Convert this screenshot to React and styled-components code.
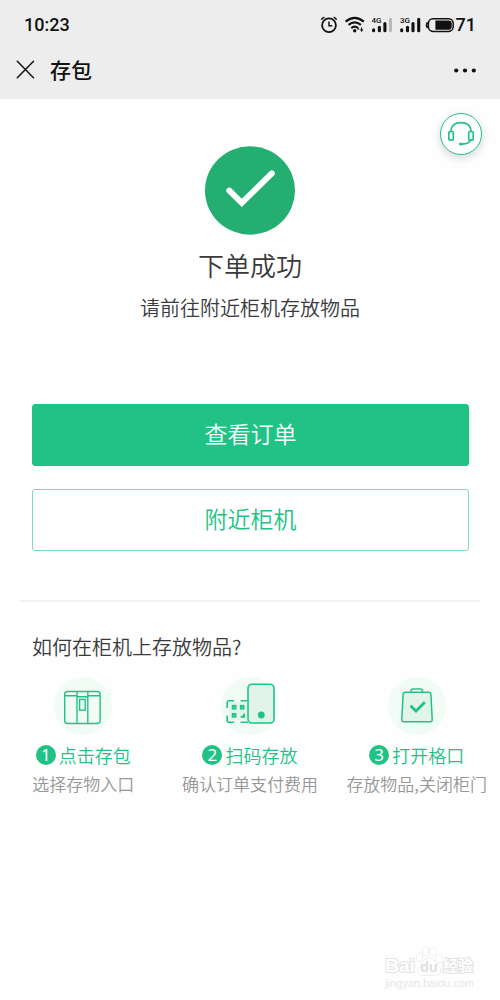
import React from "react";
import styled, { createGlobalStyle } from "styled-components";

const GREEN = "#20c385";

const GlobalStyle = createGlobalStyle`
  *, *::before, *::after { box-sizing: border-box; }
  body {
    margin: 0;
    background: #fefefe;
    color: #3a3a3a;
    font-family: "Noto Sans CJK SC", sans-serif;
    font-weight: 350;
  }
  h1, h2, h3, p, ol { margin: 0; padding: 0; font-weight: inherit; }
  button { font: inherit; cursor: pointer; }
  svg { display: block; }
`;

const Page = styled.div`
  position: relative;
  min-height: 100vh;
  display: flex;
  flex-direction: column;
`;

const TopArea = styled.header`
  background: #ededed;
  color: #111;
`;

const StatusBar = styled.div`
  display: flex;
  align-items: center;
  justify-content: space-between;
  height: 50px;
  padding: 0 24px;
  font-family: Roboto, sans-serif;
  font-size: 18px;
  font-weight: 500;
  line-height: 24px;
`;

const StatusIcons = styled.div`
  display: flex;
  align-items: center;
  gap: 2px;
  svg { flex: none; }
`;

const NavBar = styled.nav`
  display: flex;
  align-items: center;
  height: 49px;
  padding: 0 22px 10px 16px;
`;

const IconButton = styled.button`
  display: flex;
  padding: 0;
  border: 0;
  background: none;
  color: inherit;
`;

const NavTitle = styled.h1`
  flex: 1;
  margin-left: 15px;
  padding-bottom: 2px;
  font-size: 21px;
  line-height: 28px;
  && { font-weight: 500; }
`;

const Content = styled.main`
  position: relative;
  padding: 47px 0 24px;
`;

const ServiceButton = styled.button`
  position: absolute;
  top: 14px;
  right: 18px;
  display: flex;
  align-items: center;
  justify-content: center;
  width: 42px;
  height: 42px;
  padding: 0;
  border: 1px solid ${GREEN};
  border-radius: 50%;
  background: #fff;
  color: ${GREEN};
  box-shadow: 0 3px 8px rgba(0, 0, 0, 0.16);
`;

const Result = styled.section`
  display: flex;
  flex-direction: column;
  align-items: center;
  text-align: center;
`;

const ResultTitle = styled.h2`
  margin-top: 12px;
  font-size: 26px;
  line-height: 36px;
`;

const ResultText = styled.p`
  margin-top: 11px;
  font-size: 20px;
  line-height: 28px;
`;

const Actions = styled.div`
  display: flex;
  flex-direction: column;
  gap: 23px;
  padding: 0 31px 0 32px;
  margin-top: 82px;
`;

const ActionButton = styled.button`
  width: 100%;
  height: 62px;
  padding: 0 0 5px;
  border: 1px solid ${(p) => (p.$primary ? GREEN : "#7fdcb6")};
  border-radius: 3px;
  background: ${(p) => (p.$primary ? GREEN : "#fff")};
  color: ${(p) => (p.$primary ? "#fff" : GREEN)};
  font-size: 23px;
  line-height: 32px;
`;

const Divider = styled.hr`
  height: 2px;
  margin: 49px 20px 0;
  border: 0;
  background: #f1f1f1;
`;

const GuideTitle = styled.h2`
  margin: 31px 32px 0;
  font-size: 20px;
  line-height: 28px;
`;

const Steps = styled.ol`
  display: grid;
  grid-template-columns: repeat(3, minmax(0, 1fr));
  margin-top: 16px;
  list-style: none;
`;

const Step = styled.li`
  display: flex;
  flex-direction: column;
  align-items: center;
  white-space: nowrap;
`;

const StepTitle = styled.h3`
  display: flex;
  align-items: center;
  gap: 3px;
  margin-top: 7px;
  color: ${GREEN};
  font-size: 18px;
  line-height: 26px;
`;

const StepNumber = styled.span`
  width: 20px;
  height: 20px;
  border-radius: 50%;
  background: ${GREEN};
  color: #fff;
  font-family: "Noto Sans", sans-serif;
  font-size: 17px;
  font-weight: 400;
  line-height: 20px;
  text-align: center;
`;

const StepText = styled.p`
  margin-top: 4px;
  color: #979797;
  font-size: 17px;
  line-height: 24px;
`;

const Watermark = styled.div`
  position: absolute;
  right: 26px;
  bottom: 10px;
  color: #fff;
  font-family: "Liberation Sans", "Noto Sans CJK SC", sans-serif;
`;

const WatermarkBrand = styled.div`
  display: flex;
  align-items: flex-end;
  font-size: 19px;
  font-weight: 700;
  line-height: 20px;
  -webkit-text-stroke: 2px #e2e2e2;
  paint-order: stroke fill;
`;

const Paw = styled.span`
  position: relative;
  width: 28px;
  height: 30px;
  svg { position: absolute; inset: 0; }
`;

const PawText = styled.span`
  position: absolute;
  left: 0;
  right: 0;
  bottom: 0;
  color: #dedede;
  font-size: 14px;
  line-height: 18px;
  text-align: center;
  -webkit-text-stroke: 0;
`;

const WatermarkCn = styled.span`
  font-size: 15px;
`;

const WatermarkSite = styled.div`
  color: #e6e6e6;
  font-size: 11px;
  font-weight: 400;
  line-height: 14px;
`;

function StatusGlyphs() {
  return (
    <svg width="134" height="24" viewBox="320 13 134 24" fill="none" stroke="#111" aria-hidden="true">
      <circle cx="329" cy="25.2" r="6.9" strokeWidth="1.8" />
      <path d="M329 21.5v4.2h3.2" strokeWidth="1.5" />
      <path d="M321.4 19.8q.8-1.8 3-2.5M336.6 19.8q-.8-1.8-3-2.5" strokeWidth="1.6" />
      <g strokeWidth="2.1">
        <path d="M345.6 21.6q9-7.6 18.2 0" />
        <path d="M348.5 24.9q6.2-5 12.4 0" />
        <path d="M351.3 28.1q3.4-2.8 6.8 0" />
      </g>
      <circle cx="354.7" cy="30.8" r="1.7" fill="#111" stroke="none" />
      <path d="M361.6 27.6v3.4" strokeWidth="1.2" />
      <path d="M357 29.6l1.4-1.7 1.4 1.7zM359.9 29.6h3.4l-1.7 2.4z" fill="#111" stroke="none" />
      <g strokeWidth="3.1" strokeLinecap="round">
        <path d="M373.6 29.7v1" />
        <path d="M379.4 27.2v3.5" />
        <path d="M384.9 23.6v7.1" />
        <path d="M390.5 19.2v11.5" stroke="#b9b9b9" />
        <path d="M401.7 29.7v1" />
        <path d="M407.5 27.2v3.5" />
        <path d="M413 23.6v7.1" />
        <path d="M418.7 19.2v11.5" />
      </g>
      <g fill="#111" stroke="none" fontFamily="Roboto, sans-serif" fontSize="8" fontWeight="500">
        <text x="371.5" y="23">4G</text>
        <text x="400" y="23">3G</text>
      </g>
      <rect x="428.4" y="18.8" width="24.8" height="12.6" rx="4.6" strokeWidth="1.5" />
      <path d="M427.6 22.2q-2.2 2.900 0 5.800" strokeWidth="1.6" />
      <path d="M435.4 20.5h13.3a3 3 0 0 1 3 3v3.2a3 3 0 0 1-3 3h-13.3z" fill="#111" stroke="none" />
    </svg>
  );
}

function CloseIcon() {
  return (
    <svg width="19" height="19" viewBox="0 0 19 19" fill="none" stroke="#1a1a1a" strokeWidth="1.6" strokeLinecap="round">
      <path d="M1.3 1.3l16.2 16.4M17.5 1.3L1.3 17.7" />
    </svg>
  );
}

function MoreIcon() {
  return (
    <svg width="24" height="20" viewBox="0 0 24 20" fill="#111">
      <circle cx="2.2" cy="10.5" r="2.1" />
      <circle cx="11" cy="10.5" r="2.1" />
      <circle cx="19.8" cy="10.5" r="2.1" />
    </svg>
  );
}

function HeadsetIcon() {
  return (
    <svg width="28" height="28" viewBox="0 0 28 28" fill="none" stroke="currentColor" strokeWidth="1.7" strokeLinecap="round">
      <path d="M3.8 11.5C4.2 5.4 8.4 2.7 14 2.7S23.8 5.4 24.2 11.5" />
      <rect x="1.8" y="11.5" width="4.5" height="8.6" rx="1.2" />
      <rect x="21.7" y="11.5" width="4.5" height="8.6" rx="1.2" />
      <path d="M23.5 20.2q-1.4 3.6-8.5 4" />
      <path d="M13.2 24.1h1.3" strokeWidth="2.6" />
    </svg>
  );
}

function SuccessIcon() {
  return (
    <svg width="90" height="89" viewBox="0 0 90 89" role="img" aria-label="成功">
      <ellipse cx="45" cy="44.5" rx="45" ry="44.2" fill="#24ae72" />
      <path d="M24.3 44.7L36.8 56.8L66.8 27.4" fill="none" stroke="#fff" strokeWidth="6" strokeLinecap="round" />
    </svg>
  );
}

function LockerIcon() {
  return (
    <svg width="58" height="58" viewBox="0 0 58 58" fill="none" stroke={GREEN} strokeWidth="1.4">
      <circle cx="29" cy="29" r="29" fill="#f2fcf7" stroke="none" />
      <rect x="10.7" y="14.5" width="35.4" height="32" rx="3" />
      <path d="M11 18.8h12M33.8 18.8H46M23 14.5v32M33.8 14.5v32M23 19.8h10.8" />
      <rect x="25.6" y="22.4" width="5.6" height="10.8" />
    </svg>
  );
}

function ScanIcon() {
  return (
    <svg width="58" height="58" viewBox="0 0 58 58" fill="none" stroke={GREEN} strokeWidth="1.6">
      <circle cx="29" cy="29" r="29" fill="#f2fcf7" stroke="none" />
      <rect x="8" y="25" width="18" height="18" fill="#e5f5ed" stroke="none" />
      <path d="M6.2 31v-5.2q0-2 2-2h5M19.5 23.8h7M6.2 38.5v4.7q0 2 2 2h5M19.5 45.2h7.5" />
      <rect x="27" y="7.2" width="26" height="38.8" rx="4" fill="#e1f3ea" />
      <circle cx="40.3" cy="38" r="3.4" fill={GREEN} stroke="none" />
      <g strokeWidth="1.9">
        <rect x="11.7" y="28.8" width="2.8" height="2.8" />
        <rect x="19.8" y="28.8" width="2.8" height="2.8" />
        <rect x="11.7" y="36.9" width="2.8" height="2.8" />
        <path d="M23 36.5v3.2h-3.4" />
      </g>
    </svg>
  );
}

function BagIcon() {
  return (
    <svg width="58" height="58" viewBox="0 0 58 58" fill="none" stroke={GREEN} strokeWidth="1.5" strokeLinejoin="round">
      <circle cx="29" cy="29" r="29" fill="#f2fcf7" stroke="none" />
      <path d="M23 15v-1q0-2 2-2h7.5q2 0 2 2v1" />
      <path d="M17.2 15.3h23.6q2 0 2.1 2l1.3 25.2q.1 2.3-2.1 2.3H15.9q-2.2 0-2.1-2.3l1.3-25.2q.1-2 2.1-2z" fill="#e1f3ea" />
      <path d="M22.500 28.700l5.500 5.300 8.800-8.800" strokeWidth="2.800" strokeLinejoin="miter" />
    </svg>
  );
}

function PawIcon() {
  return (
    <svg width="28" height="30" viewBox="0 0 28 30" fill="#fff" stroke="#dedede">
      <ellipse cx="4.5" cy="11.5" rx="3" ry="4" />
      <ellipse cx="10.5" cy="5.3" rx="3" ry="4.2" />
      <ellipse cx="18" cy="5.5" rx="3" ry="4.2" />
      <ellipse cx="24" cy="12.3" rx="3" ry="4" />
      <path d="M14 12C9 12 8 17 4.500 20.500C1 24 3 29 8 29H20C26 29 27 24 23.500 20.500C20 17 19 12 14 12Z" />
    </svg>
  );
}

const steps = [
  { Icon: LockerIcon, title: "点击存包", text: "选择存物入口" },
  { Icon: ScanIcon, title: "扫码存放", text: "确认订单支付费用" },
  { Icon: BagIcon, title: "打开格口", text: "存放物品,关闭柜门" },
];

export default function App() {
  return (
    <Page>
      <GlobalStyle />
      <TopArea>
        <StatusBar>
          <span>10:23</span>
          <StatusIcons>
            <StatusGlyphs />
            <span>71</span>
          </StatusIcons>
        </StatusBar>
        <NavBar>
          <IconButton aria-label="关闭"><CloseIcon /></IconButton>
          <NavTitle>存包</NavTitle>
          <IconButton aria-label="更多"><MoreIcon /></IconButton>
        </NavBar>
      </TopArea>
      <Content>
        <ServiceButton aria-label="客服"><HeadsetIcon /></ServiceButton>
        <Result>
          <SuccessIcon />
          <ResultTitle>下单成功</ResultTitle>
          <ResultText>请前往附近柜机存放物品</ResultText>
        </Result>
        <Actions>
          <ActionButton $primary>查看订单</ActionButton>
          <ActionButton>附近柜机</ActionButton>
        </Actions>
        <Divider />
        <GuideTitle>如何在柜机上存放物品?</GuideTitle>
        <Steps>
          {steps.map(({ Icon, title, text }, i) => (
            <Step key={title}>
              <Icon />
              <StepTitle>
                <StepNumber>{i + 1}</StepNumber>
                {title}
              </StepTitle>
              <StepText>{text}</StepText>
            </Step>
          ))}
        </Steps>
      </Content>
      <Watermark>
        <WatermarkBrand>
          <span>Bai</span>
          <Paw>
            <PawIcon />
            <PawText>du</PawText>
          </Paw>
          <WatermarkCn>经验</WatermarkCn>
        </WatermarkBrand>
        <WatermarkSite>jingyan.baidu.com</WatermarkSite>
      </Watermark>
    </Page>
  );
}
